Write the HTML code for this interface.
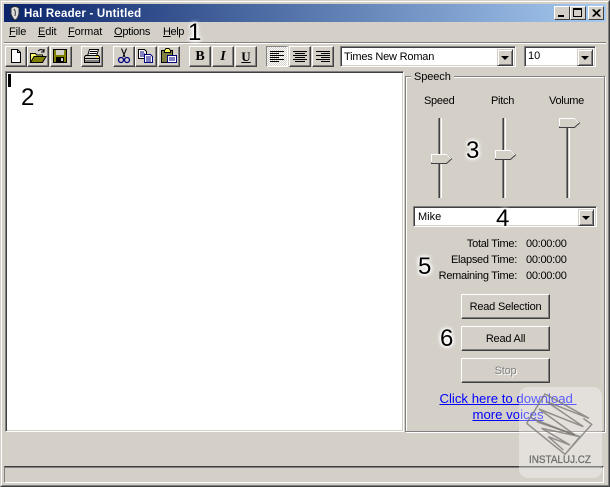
<!DOCTYPE html>
<html><head><meta charset="utf-8"><style>
html,body{margin:0;padding:0;background:#d4d0c8;}
#w{position:relative;width:610px;height:487px;overflow:hidden;background:#d4d0c8;font-family:"Liberation Sans",sans-serif;font-size:11px;color:#000;}
#w div,#w svg,#w span.a{position:absolute;}
.t{white-space:nowrap;line-height:13px;}
.m{letter-spacing:-.12px;}
.btn{width:20px;height:19px;background:#d4d0c8;border:1px solid;border-color:#fff #404040 #404040 #fff;box-shadow:inset -1px -1px 0 #808080;}
.sunk{background:#fff;border:1px solid;border-color:#808080 #fff #fff #808080;box-shadow:inset 1px 1px 0 #404040,inset -1px -1px 0 #d4d0c8;box-sizing:border-box;}
.arr{width:16px;background:#d4d0c8;border:1px solid;border-color:#d4d0c8 #404040 #404040 #d4d0c8;box-shadow:inset 1px 1px 0 #fff,inset -1px -1px 0 #808080;box-sizing:border-box;}
.arr:after{content:"";position:absolute;left:3px;top:6px;border:4px solid transparent;border-top:4px solid #000;border-bottom:0;}
.pb{left:461px;width:89px;height:25px;box-sizing:border-box;background:#d4d0c8;border:1px solid;border-color:#fff #404040 #404040 #fff;box-shadow:inset -1px -1px 0 #808080;text-align:center;line-height:24px;font-size:11px;letter-spacing:-.2px;}
.n{font-size:24px;line-height:28px;color:#000;text-shadow:0 0 2px #fff,0 0 3px #fff,0 0 4px #fff,0 0 5px #fff,0 0 6px #fff;}
.track{width:4px;height:80px;background:linear-gradient(90deg,#808080 0 1px,#404040 1px 2px,#d4d0c8 2px 3px,#fff 3px 4px);}
.lab{font-size:11px;letter-spacing:-.28px;}
</style></head><body><div id="w">
<!-- window frame -->
<div style="left:0;top:0;width:610px;height:487px;box-sizing:border-box;border:1px solid;border-color:#d4d0c8 #404040 #404040 #d4d0c8;"></div>
<div style="left:1px;top:1px;width:608px;height:485px;box-sizing:border-box;border:1px solid;border-color:#fff #808080 #808080 #fff;"></div>
<!-- title -->
<div style="left:4px;top:4px;width:602px;height:18px;background:linear-gradient(90deg,#0a246a,#a6caf0);"></div>
<svg style="left:7px;top:5px" width="16" height="16" viewBox="0 0 16 16"><path d="M4 3Q8 0 12 3L12 9Q10 15 8 15Q6 14 4 9Z" fill="#ddd" stroke="#333"/><path d="M7 4Q9 6 8 11" stroke="#333" fill="none"/></svg>
<div class="t" style="left:24px;top:8px;color:#fff;font-weight:bold;font-size:11.5px;letter-spacing:.2px;">Hal Reader - Untitled</div>
<div style="left:554px;top:6px;width:16px;height:14px;box-sizing:border-box;background:#d4d0c8;border:1px solid;border-color:#fff #404040 #404040 #fff;"><div style="left:3px;top:8px;width:6px;height:2px;background:#000"></div></div>
<div style="left:570px;top:6px;width:16px;height:14px;box-sizing:border-box;background:#d4d0c8;border:1px solid;border-color:#fff #404040 #404040 #fff;"><div style="left:2px;top:1px;width:9px;height:9px;box-sizing:border-box;border:1px solid #000;border-top-width:2px"></div></div>
<div style="left:588px;top:6px;width:16px;height:14px;box-sizing:border-box;background:#d4d0c8;border:1px solid;border-color:#fff #404040 #404040 #fff;"><svg style="left:3px;top:2px" width="9" height="8"><path d="M0.5 0.5L7.5 7.5M1.5 0.5L8.5 7.5M7.5 0.5L0.5 7.5M8.5 0.5L1.5 7.5" stroke="#000"/></svg></div>
<!-- menu -->
<div class="t m" style="left:9px;top:26px;"><u>F</u>ile</div>
<div class="t m" style="left:38px;top:26px;"><u>E</u>dit</div>
<div class="t m" style="left:68px;top:26px;"><u>F</u>ormat</div>
<div class="t m" style="left:114px;top:26px;letter-spacing:-.25px"><u>O</u>ptions</div>
<div class="t m" style="left:163px;top:26px;letter-spacing:-.4px"><u>H</u>elp</div>
<div style="left:4px;top:42px;width:602px;height:1px;background:#808080"></div>
<div style="left:4px;top:43px;width:602px;height:1px;background:#fff"></div>
<!-- toolbar buttons -->
<div class="btn" style="left:5px;top:46px"><svg style="left:3px;top:2px" width="14" height="15"><path d="M2.5 .5H8.5L11.5 3.5V13.5H2.5Z" fill="#fff" stroke="#000"/><path d="M8.5 .5V3.5H11.5" fill="none" stroke="#000"/></svg></div>
<div class="btn" style="left:27px;top:46px"><svg style="left:1px;top:1px" width="18" height="16"><path d="M1.5 5.5H6.5L7.5 7H13.5V14.5H1.5Z" fill="#ffff66" stroke="#000"/><path d="M1.5 14.5L5 8.5H17L13.5 14.5Z" fill="#808000" stroke="#000"/><path d="M9 3Q12 0 15 3M15 1V4H12" fill="none" stroke="#000"/></svg></div>
<div class="btn" style="left:50px;top:46px"><svg style="left:2px;top:2px" width="15" height="15"><rect x=".5" y=".5" width="13" height="13" fill="#808000" stroke="#000"/><rect x="3" y="1" width="8" height="5" fill="#d4d0c8"/><rect x="3" y="8" width="8" height="5" fill="#000"/><rect x="8" y="9" width="2" height="3" fill="#d4d0c8"/></svg></div>
<div class="btn" style="left:81px;top:46px"><svg style="left:1px;top:1px" width="18" height="17"><path d="M6.5 1.5H15.5L13.5 8H4.5Z" fill="#fff" stroke="#000"/><path d="M7 3.5H14M6.5 5.5H13.5" stroke="#000"/><path d="M2.5 7.5H15.5L16.5 9V14.5H1.5V9Z" fill="#d4d0c8" stroke="#000"/><rect x="2" y="10" width="14" height="1" fill="#000"/><rect x="2" y="12" width="14" height="2" fill="#808080"/><rect x="13" y="8" width="2" height="1" fill="#ff0"/></svg></div>
<div class="btn" style="left:113px;top:46px"><svg style="left:3px;top:1px" width="14" height="17"><path d="M4.5 0.5L8 9M9.5 0.5L6 9" stroke="#000" fill="none"/><circle cx="4" cy="12" r="2.5" fill="none" stroke="#000080" stroke-width="1.3"/><circle cx="10" cy="12" r="2.5" fill="none" stroke="#000080" stroke-width="1.3"/></svg></div>
<div class="btn" style="left:135px;top:46px"><svg style="left:2px;top:2px" width="16" height="15"><path d="M.5 .5H6.5L8.5 2.5V9.5H.5Z" fill="#fff" stroke="#000"/><path d="M2 3H6M2 5H7M2 7H7" stroke="#000080"/><path d="M6.5 5.5H12.5L14.5 7.5V13.5H6.5Z" fill="#fff" stroke="#000080"/><path d="M8 8H13M8 10H13M8 12H13" stroke="#000080"/></svg></div>
<div class="btn" style="left:158px;top:46px"><svg style="left:2px;top:1px" width="17" height="16"><rect x=".5" y="2.5" width="11" height="12" fill="#808040" stroke="#000"/><path d="M3.5 2.5L5 .5H8L9.5 2.5V4.5H3.5Z" fill="#ffff66" stroke="#000"/><rect x="6.5" y="7.5" width="9" height="7" fill="#fff" stroke="#000080"/><path d="M8 10H14M8 12H14" stroke="#000080"/></svg></div>
<div class="btn" style="left:189px;top:46px;font:bold 14px 'Liberation Serif',serif;text-align:center;line-height:20px;">B</div>
<div class="btn" style="left:212px;top:46px;font:italic bold 14px 'Liberation Serif',serif;text-align:center;line-height:20px;">I</div>
<div class="btn" style="left:235px;top:46px;font:bold 13px 'Liberation Serif',serif;text-align:center;line-height:19px;"><u>U</u></div>
<div class="btn" style="left:266px;top:46px;border-color:#808080 #fff #fff #808080;box-shadow:none;background:repeating-conic-gradient(#fff 0 25%,#d4d0c8 0 50%) 0 0/2px 2px;"><svg style="left:3px;top:3px" width="14" height="13"><path d="M0 1.5H14M0 3.5H9M0 5.5H14M0 7.5H9M0 9.5H14M0 11.5H9" stroke="#000"/></svg></div>
<div class="btn" style="left:289px;top:46px"><svg style="left:3px;top:3px" width="14" height="13"><path d="M0 1.5H14M2 3.5H12M0 5.5H14M2 7.5H12M0 9.5H14M2 11.5H12" stroke="#000"/></svg></div>
<div class="btn" style="left:312px;top:46px"><svg style="left:3px;top:3px" width="14" height="13"><path d="M0 1.5H14M5 3.5H14M0 5.5H14M5 7.5H14M0 9.5H14M5 11.5H14" stroke="#000"/></svg></div>
<!-- combos -->
<div class="sunk" style="left:340px;top:46px;width:176px;height:21px;"><div class="t" style="left:3px;top:4px;font-size:11px;letter-spacing:-.2px">Times New Roman</div><div class="arr" style="right:2px;top:2px;height:17px"></div></div>
<div class="sunk" style="left:524px;top:46px;width:72px;height:21px;"><div class="t" style="left:3px;top:3px;font-size:11px">10</div><div class="arr" style="right:2px;top:2px;height:17px"></div></div>
<!-- editor -->
<div class="sunk" style="left:5px;top:71px;width:399px;height:361px;"></div>
<div style="left:8px;top:74px;width:3px;height:13px;background:#000"></div>
<!-- group -->
<div style="left:405px;top:76px;width:200px;height:356px;box-sizing:border-box;border:1px solid #808080;box-shadow:1px 1px 0 #fff,inset 1px 1px 0 #fff;"></div>
<div class="t" style="left:411px;top:71px;padding:0 3px;background:#d4d0c8;font-size:11px;letter-spacing:-.1px">Speech</div>
<div class="t lab" style="left:424px;top:95px;">Speed</div>
<div class="t lab" style="left:491px;top:95px;">Pitch</div>
<div class="t lab" style="left:549px;top:95px;">Volume</div>
<!-- sliders -->
<div class="track" style="left:438px;top:118px;"></div>
<div class="track" style="left:502px;top:118px;"></div>
<div class="track" style="left:566px;top:118px;"></div>
<svg style="left:430px;top:153px" width="23" height="12"><path d="M1.5 1.5H16.5L21.5 6L16.5 10.5H1.5Z" fill="#d4d0c8" stroke="#404040"/><path d="M1.5 9.5V1.5H16.5L21 5.8" fill="none" stroke="#fff"/></svg>
<svg style="left:494px;top:149px" width="23" height="12"><path d="M1.5 1.5H16.5L21.5 6L16.5 10.5H1.5Z" fill="#d4d0c8" stroke="#404040"/><path d="M1.5 9.5V1.5H16.5L21 5.8" fill="none" stroke="#fff"/></svg>
<svg style="left:558px;top:117px" width="23" height="12"><path d="M1.5 1.5H16.5L21.5 6L16.5 10.5H1.5Z" fill="#d4d0c8" stroke="#404040"/><path d="M1.5 9.5V1.5H16.5L21 5.8" fill="none" stroke="#fff"/></svg>
<!-- voice combo -->
<div class="sunk" style="left:413px;top:206px;width:184px;height:21px;"><div class="t" style="left:4px;top:4px;font-size:11px">Mike</div><div class="arr" style="right:2px;top:2px;height:17px"></div></div>
<!-- times -->
<div class="t lab" style="right:93px;top:238px;">Total Time:</div>
<div class="t lab" style="right:93px;top:254px;">Elapsed Time:</div>
<div class="t lab" style="right:93px;top:270px;">Remaining Time:</div>
<div class="t lab" style="left:526px;top:238px;">00:00:00</div>
<div class="t lab" style="left:526px;top:254px;">00:00:00</div>
<div class="t lab" style="left:526px;top:270px;">00:00:00</div>
<!-- buttons -->
<div class="pb" style="top:294px;">Read Selection</div>
<div class="pb" style="top:326px;">Read All</div>
<div class="pb" style="top:358px;color:#808080;text-shadow:1px 1px 0 #fff">Stop</div>
<!-- link -->
<div class="t" style="left:408px;width:200px;top:391px;text-align:center;font-size:13.2px;line-height:16px;color:#0000ff;"><u>Click here to download&nbsp;<br>more voices</u></div>
<!-- status -->
<div style="left:4px;top:466px;width:600px;height:17px;box-sizing:border-box;border:1px solid;border-color:#404040 #fff #fff #808080;box-shadow:inset 0 1px 0 #808080"></div>
<!-- numbers -->
<div class="t n" style="left:188px;top:19px;">1</div>
<div class="t n" style="left:21px;top:84px;">2</div>
<div class="t n" style="left:466px;top:137px;">3</div>
<div class="t n" style="left:496px;top:205px;">4</div>
<div class="t n" style="left:418px;top:253px;">5</div>
<div class="t n" style="left:440px;top:325px;">6</div>
<!-- watermark -->
<div style="left:519px;top:387px;width:83px;height:91px;border-radius:9px;background:rgba(255,255,255,.35);"></div>
<svg style="left:515px;top:385px" width="90" height="95" viewBox="0 0 270 285" fill="none" stroke="#77746f" stroke-opacity=".75" stroke-width="4.5"><path d="M35 115L90 27L222 100L95 50L205 125L72 72L180 150L50 100"/><path d="M35 115L150 208L230 118L205 100M150 208L195 155M65 110L195 155L80 130L165 180L100 155L145 195"/></svg>
<div class="t" style="left:529px;top:454px;font-size:11px;color:#70706c;letter-spacing:0;transform:scaleX(.9);transform-origin:left;-webkit-text-stroke:.3px #70706c">INSTALUJ.CZ</div>
</div></body></html>
